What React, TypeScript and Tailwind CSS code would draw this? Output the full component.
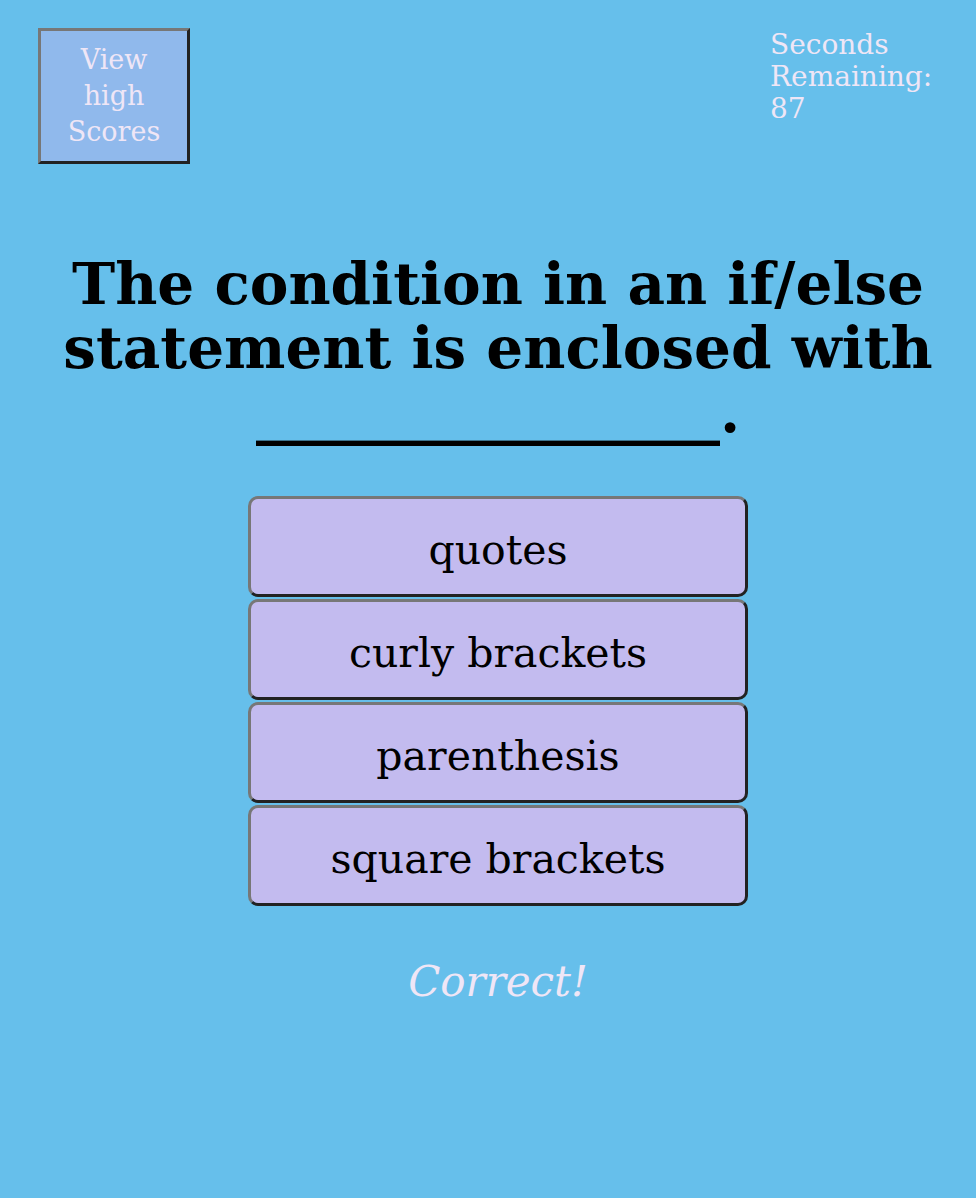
const answers = ['quotes', 'curly brackets', 'parenthesis', 'square brackets']

export default function App() {
  return (
    <div
      className="min-h-[1198px] w-full bg-[#66bfeb] pl-[20px] pt-[28px]"
      style={{ fontFamily: '"DejaVu Serif", Georgia, serif' }}
    >
      <div className="flex items-start justify-between pr-[6px]">
        <button className="ml-[18px] h-[136px] w-[152px] border-[3px] border-t-[#777] border-l-[#777] border-b-[#222] border-r-[#222] bg-[#90b9ec] text-[27px] leading-[36px] text-[#efe6f6]">
          View
          <br />
          high
          <br />
          Scores
        </button>
        <div className="w-[200px] pt-[1px] text-[28px] leading-[32px] text-[#efe6f6]">
          Seconds
          <br />
          Remaining:
          <br />
          87
        </div>
      </div>

      <h1 className="mx-auto mt-[88px] max-w-[920px] text-center text-[58px] font-bold leading-[64px] text-black">
        The condition in an if/else statement is enclosed with ________________.
      </h1>

      <div className="mx-auto mt-[52px] flex w-[500px] flex-col gap-[2px]">
        {answers.map((a) => (
          <button
            key={a}
            className="h-[101px] rounded-[10px] border-[3px] border-t-[#777] border-l-[#777] border-b-[#222] border-r-[#222] bg-[#c3bbef] pt-[8px] text-[41px] text-black"
          >
            {a}
          </button>
        ))}
      </div>

      <p className="mt-[44px] text-center text-[42px] italic text-[#efe6f6]">Correct!</p>
    </div>
  )
}
